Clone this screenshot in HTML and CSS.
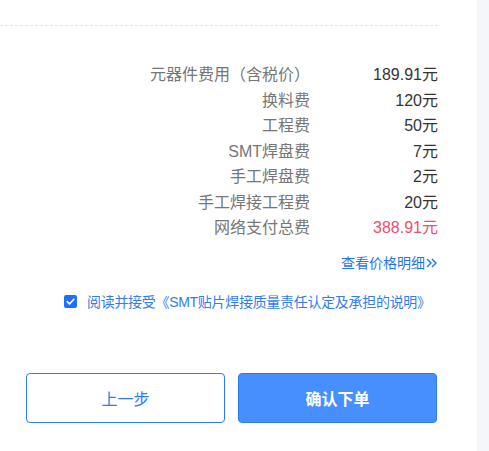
FILE: index.html
```html
<!DOCTYPE html>
<html lang="zh-CN">
<head>
<meta charset="utf-8">
<link rel="stylesheet" href="styles.css">
</head>
<body>
<div class="panel">
  <div class="divider"></div>
  <div class="fees">
    <div class="label">元器件费用（含税价）</div><div class="value">189.91元</div>
    <div class="label">换料费</div><div class="value">120元</div>
    <div class="label">工程费</div><div class="value">50元</div>
    <div class="label">SMT焊盘费</div><div class="value">7元</div>
    <div class="label">手工焊盘费</div><div class="value">2元</div>
    <div class="label">手工焊接工程费</div><div class="value">20元</div>
    <div class="label">网络支付总费</div><div class="value total">388.91元</div>
  </div>
  <div class="detail"><a class="detail-link">查看价格明细<svg class="chev" width="12" height="10" viewBox="0 0 12 10"><path d="M1 1l4 4-4 4M6 1l4 4-4 4" fill="none" stroke="currentColor" stroke-width="1.4"/></svg></a></div>
  <label class="agree">
    <span class="box"><svg width="13" height="13" viewBox="0 0 13 13"><path d="M3.2 6.6l2.3 2.3 4.4-4.6" fill="none" stroke="#fff" stroke-width="1.6" stroke-linecap="round" stroke-linejoin="round"/></svg></span>
    <span class="agree-text">阅读并接受《SMT贴片焊接质量责任认定及承担的说明》</span>
  </label>
  <div class="actions">
    <button class="btn btn-prev">上一步</button>
    <button class="btn btn-confirm">确认下单</button>
  </div>
</div>
</body>
</html>
```
FILE: styles.css
```css
html, body {
  margin: 0;
  padding: 0;
}
body {
  background: #f5f6fa;
  font-family: "Liberation Sans", "Noto Sans CJK SC", sans-serif;
  width: 489px;
  height: 451px;
  overflow: hidden;
}
.panel {
  background: #fff;
  width: 477px;
  height: 451px;
  box-sizing: border-box;
  padding: 25px 39px 0 26px;
}
.divider {
  margin-left: -26px;
  border-top: 1px dashed #e3e5ea;
}
.fees {
  margin-top: 36px;
  display: grid;
  grid-template-columns: 1fr 128px;
  font-size: 16px;
  line-height: 25.5px;
  text-align: right;
}
.label {
  color: #767676;
}
.value {
  color: #333;
}
.value.total {
  color: #f24d6b;
}
.detail {
  margin-top: 12px;
  text-align: right;
  font-size: 14px;
  line-height: 20px;
}
.detail-link {
  color: #1f74f5;
  display: inline-flex;
  align-items: center;
  gap: 1px;
}
.chev {
  display: block;
}
.agree {
  margin-top: 19px;
  margin-left: 38px;
  display: flex;
  align-items: center;
  gap: 10px;
  font-size: 14px;
  line-height: 20px;
  color: #2f7cf6;
  letter-spacing: -0.3px;
}
.box {
  width: 13px;
  height: 13px;
  background: #1f6fff;
  border-radius: 2px;
  display: block;
}
.box svg {
  display: block;
}
.actions {
  margin-top: 61px;
  display: flex;
  gap: 13px;
}
.btn {
  width: 199px;
  height: 50px;
  border-radius: 4px;
  font-family: inherit;
  font-size: 16px;
  border: 1px solid #2a7cf6;
  cursor: pointer;
}
.btn-prev {
  background: #fff;
  color: #2a7cf6;
}
.btn-confirm {
  background: #478efe;
  color: #fff;
  font-weight: bold;
}
```
